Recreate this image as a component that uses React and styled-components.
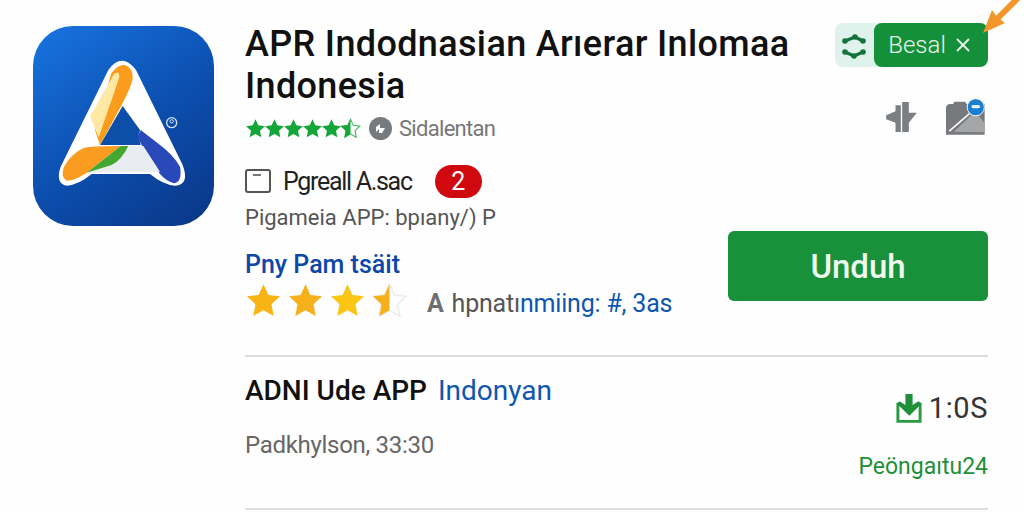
import React from 'react';
import styled, { createGlobalStyle } from 'styled-components';
import { X } from 'lucide-react';

const GlobalStyle = createGlobalStyle`
  html, body {
    margin: 0;
    padding: 0;
    background: #fefefe;
    font-family: Roboto, "Liberation Sans", sans-serif;
    color: #111;
  }
`;

const STAR = 'M12 1.5l3.2 6.9 7.5.9-5.5 5.2 1.4 7.5-6.6-3.7-6.6 3.7 1.4-7.5L1.3 9.3l7.5-.9z';

const AppLogo = () => (
  <LogoSvg viewBox="-51 -72 543 600">
    <defs>
      <linearGradient id="tile" x1="0.15" y1="0" x2="0.8" y2="1">
        <stop offset="0" stopColor="#1770dc" />
        <stop offset="0.55" stopColor="#0c4eae" />
        <stop offset="1" stopColor="#0a3a8c" />
      </linearGradient>
    </defs>
    <rect x="-51" y="-72" width="543" height="600" rx="120" fill="url(#tile)" />
    <path d="M175 60Q215 5 258 60L398 345Q420 405 375 407Q340 405 300 372L125 372Q85 405 50 407Q15 400 32 350Z" fill="#fff" />
    <path d="M218 168L150 285L272 285L265 258L270 240Z" fill="#0d4fa8" />
    <path d="M272 240L262 262L275 285L330 372Q350 395 372 400Q398 395 390 350Q370 315 330 285Z" fill="#2a49b8" />
    <path d="M184 70Q205 42 225 45Q250 55 248 85Q245 108 215 165L150 285L135 240Z" fill="#fb9c1c" />
    <path d="M192 72Q208 60 208 80L198 112L146 262L120 200Z" fill="#fde9a4" />
    <path d="M235 288L280 288L330 365L125 368L110 368L185 345Q215 330 235 288Z" fill="#e9edf2" />
    <path d="M100 295Q110 288 212 288L110 368Q75 392 50 392Q30 380 42 350Q65 310 100 295Z" fill="#f99c1f" />
    <path d="M212 288L235 288Q215 330 185 345L110 368Z" fill="#44a830" />
    <circle cx="365" cy="218" r="15" fill="none" stroke="#d8e6f6" strokeWidth="4" />
    <circle cx="365" cy="214" r="5" fill="none" stroke="#d8e6f6" strokeWidth="3" />
  </LogoSvg>
);

const Star = ({ size, fill, half, edge }) => (
  <svg width={size} height={size} viewBox="0 0 24 24">
    {half ? (
      <>
        <path d={STAR} fill="none" stroke={edge} strokeWidth="1.2" />
        <path d={STAR} fill={fill} style={{ clipPath: 'inset(0 50% 0 0)' }} />
      </>
    ) : (
      <path d={STAR} fill={fill} />
    )}
  </svg>
);

const NodesIcon = () => (
  <svg width="39" height="39" viewBox="0 0 39 39" fill="#14733a">
    <path d="M10 15L20 11L28 15M10 26L19 30L28 26" fill="none" stroke="#14733a" strokeWidth="3.4" />
    <circle cx="10" cy="15" r="2.8" />
    <circle cx="20" cy="11" r="2.8" />
    <circle cx="28" cy="15" r="2.8" />
    <circle cx="10" cy="26" r="2.8" />
    <circle cx="19" cy="30" r="2.8" />
    <circle cx="28" cy="26" r="2.8" />
  </svg>
);

const SplitIcon = () => (
  <svg width="31" height="30" viewBox="200 310 92 90" fill="#7b7f82">
    <path d="M228 320H244V400H228V372L200 362V350L228 338Z" />
    <path d="M248 310H268V342H292L268 372V400H248Z" />
  </svg>
);

const PhotoPinIcon = () => (
  <svg width="39" height="37" viewBox="378 295 118 110">
    <path d="M378 325Q378 312 392 312H400L403 305H436L440 312H495V405H378Z" fill="#77797c" />
    <path d="M402 396L466 335L495 370V398Z" fill="#a4a6a8" />
    <path d="M388 394L462 330" stroke="#fbfbfb" strokeWidth="5" />
    <circle cx="468" cy="322" r="26" fill="#1b7fd0" stroke="#f4f7fa" strokeWidth="3" />
    <rect x="455" y="315" width="26" height="10" rx="5" fill="#e4f1fb" />
  </svg>
);

const DownloadIcon = () => (
  <svg width="26" height="31" viewBox="170 35 78 95">
    <path d="M175 65V122H243V65" fill="none" stroke="#2b9a42" strokeWidth="9" />
    <path d="M198 38H220V72L238 60L247 68L210 105L172 68L180 60L198 72Z" fill="#1f8f38" />
  </svg>
);

const CornerArrow = () => (
  <ArrowSvg viewBox="0 0 52 50">
    <path d="M46 -2L24 20" stroke="#f3962a" strokeWidth="6" />
    <path d="M11 33L20 10L25 17L33 23Z" fill="#f3962a" />
  </ArrowSvg>
);

const App = () => (
  <>
    <GlobalStyle />
    <Page>
      <CornerArrow />
      <LogoCell>
        <AppLogo />
      </LogoCell>
      <Content>
        <HeadRow>
          <HeadMain>
            <Title>
              APR Indodnasian Arıerar Inlomaa
              <br />
              Indonesia
            </Title>
            <RatingRow>
              <Stars $gap={-2} $after={8}>
                {[0, 1, 2, 3, 4].map((i) => (
                  <Star key={i} size={21} fill="#13a538" />
                ))}
                <Star size={21} fill="#13a538" half edge="#3eb45f" />
              </Stars>
              <GreyBadge>
                <svg width="17" height="17" viewBox="0 0 17 17" fill="#fff">
                  <path d="M4 7L8 4V8H13L10 13H7V9L4 12Z" />
                </svg>
              </GreyBadge>
              <Muted>Sidalentan</Muted>
            </RatingRow>
          </HeadMain>
          <HeadSide>
            <ChipGroup>
              <ChipIcon>
                <NodesIcon />
              </ChipIcon>
              <ChipButton>
                Besal <X size={22} strokeWidth={2} />
              </ChipButton>
            </ChipGroup>
            <ToolIcons>
              <SplitIcon />
              <PhotoPinIcon />
            </ToolIcons>
          </HeadSide>
        </HeadRow>

        <InfoRow>
          <InfoMain>
            <PackageRow>
              <CheckBox />
              <PackageLabel>Pgreall A.sac</PackageLabel>
              <CountBadge>2</CountBadge>
            </PackageRow>
            <SubLine>Pigameia APP: bpıany/) P</SubLine>
            <LinkLine>Pny Pam tsäit</LinkLine>
            <ScoreRow>
              <Stars $gap={5} $after={0}>
                <Star size={37} fill="#f8b415" />
                <Star size={37} fill="#f6b01a" />
                <Star size={37} fill="#fbc515" />
                <Star size={37} fill="#f6b01a" half edge="#eeeeee" />
              </Stars>
              <ScoreText>
                <ScoreMark>A</ScoreMark> hpnatı<Blue>nmiing: #, 3as</Blue>
              </ScoreText>
            </ScoreRow>
          </InfoMain>
          <DownloadButton>Unduh</DownloadButton>
        </InfoRow>

        <ListRow>
          <ListMain>
            <ListTitle>
              ADNI Ude APP <ListAccent>Indonyan</ListAccent>
            </ListTitle>
            <ListDate>Padkhylson, 33:30</ListDate>
          </ListMain>
          <ListSide>
            <TimeRow>
              <DownloadIcon />
              <span>1:0S</span>
            </TimeRow>
            <GreenNote>Peöngaıtu24</GreenNote>
          </ListSide>
        </ListRow>
      </Content>
    </Page>
  </>
);

const Page = styled.div`
  position: relative;
  width: 1024px;
  height: 512px;
  overflow: hidden;
  display: flex;
  box-sizing: border-box;
  padding: 26px 36px 0 33px;
`;

const ArrowSvg = styled.svg`
  position: absolute;
  top: 0;
  left: 972px;
  width: 52px;
  height: 50px;
`;

const LogoCell = styled.div`
  width: 212px;
  flex-shrink: 0;
`;

const LogoSvg = styled.svg`
  display: block;
  width: 181px;
  height: 200px;
`;

const Content = styled.div`
  flex: 1;
  display: flex;
  flex-direction: column;
`;

const HeadRow = styled.div`
  display: flex;
  justify-content: space-between;
  height: 127px;
`;

const HeadMain = styled.div`
  display: flex;
  flex-direction: column;
`;

const Title = styled.h1`
  margin: -3px 0 0;
  font-size: 36px;
  font-weight: 500;
  line-height: 42px;
  letter-spacing: 0.35px;
  color: #111;
  white-space: nowrap;
`;

const RatingRow = styled.div`
  display: flex;
  align-items: center;
  height: 30px;
  margin-top: 6px;
`;

const Stars = styled.div`
  display: flex;
  align-items: center;
  margin-right: ${(p) => p.$after}px;

  & > svg + svg {
    margin-left: ${(p) => p.$gap}px;
  }
`;

const GreyBadge = styled.div`
  width: 23px;
  height: 23px;
  border-radius: 50%;
  background: #777b7e;
  display: flex;
  align-items: center;
  justify-content: center;
  margin-right: 7px;
`;

const Muted = styled.span`
  font-size: 22px;
  color: #777;
  letter-spacing: -0.7px;
`;

const HeadSide = styled.div`
  width: 153px;
  display: flex;
  flex-direction: column;
  align-items: flex-end;
`;

const ChipGroup = styled.div`
  display: flex;
  width: 153px;
  height: 44px;
  margin-top: -3px;
  background: #dff2ec;
  border-radius: 8px;
`;

const ChipIcon = styled.div`
  width: 39px;
  display: flex;
  align-items: center;
  justify-content: center;
`;

const ChipButton = styled.div`
  flex: 1;
  display: flex;
  align-items: center;
  justify-content: center;
  gap: 6px;
  background: #15903a;
  border-radius: 8px;
  color: #e8f6ea;
  font-size: 24px;
  font-weight: 300;
  white-space: nowrap;
`;

const ToolIcons = styled.div`
  display: flex;
  align-items: center;
  gap: 29px;
  margin: 31px 3px 0 0;
`;

const InfoRow = styled.div`
  display: flex;
  justify-content: space-between;
  height: 202px;
  border-bottom: 2px solid #dedede;
`;

const InfoMain = styled.div`
  display: flex;
  flex-direction: column;
`;

const PackageRow = styled.div`
  display: flex;
  align-items: center;
  height: 34px;
  margin-top: 11px;
`;

const CheckBox = styled.div`
  position: relative;
  width: 26px;
  height: 24px;
  border: 2px solid #555;
  border-radius: 3px;
  box-sizing: border-box;
  margin-right: 12px;

  &::before {
    content: '';
    position: absolute;
    top: 3px;
    left: 6px;
    width: 8px;
    height: 2px;
    background: #777;
  }
`;

const PackageLabel = styled.span`
  font-size: 25px;
  color: #222;
  letter-spacing: -1.3px;
  margin-right: 23px;
`;

const CountBadge = styled.span`
  width: 47px;
  height: 33px;
  border-radius: 17px;
  background: #d0090e;
  color: #fff;
  font-size: 25px;
  line-height: 33px;
  text-align: center;
`;

const SubLine = styled.div`
  font-size: 22px;
  line-height: 30px;
  color: #555;
  margin-top: 5px;
  white-space: nowrap;
`;

const LinkLine = styled.div`
  font-size: 25px;
  font-weight: 500;
  line-height: 30px;
  color: #0d47a8;
  margin-top: 17px;
`;

const ScoreRow = styled.div`
  display: flex;
  align-items: center;
  margin-top: 2px;
`;

const ScoreText = styled.div`
  font-size: 25px;
  color: #555;
  margin: 6px 0 0 19px;
  white-space: nowrap;
  letter-spacing: -0.2px;
`;

const ScoreMark = styled.span`
  font-weight: 700;
  color: #6f6f6f;
  margin-right: 2px;
`;

const Blue = styled.span`
  color: #0e56ae;
`;

const DownloadButton = styled.button`
  width: 260px;
  height: 70px;
  margin-top: 78px;
  border: none;
  border-radius: 6px;
  background: #18913a;
  color: #eef8ef;
  font-family: inherit;
  font-size: 33px;
  font-weight: 500;
  cursor: pointer;
`;

const ListRow = styled.div`
  display: flex;
  justify-content: space-between;
  height: 151px;
  border-bottom: 2px solid #dedede;
`;

const ListMain = styled.div`
  display: flex;
  flex-direction: column;
`;

const ListTitle = styled.div`
  font-size: 28px;
  font-weight: 500;
  line-height: 32px;
  margin-top: 18px;
  white-space: nowrap;
`;

const ListAccent = styled.span`
  color: #0e56ae;
  font-weight: 400;
  margin-left: 4px;
`;

const ListDate = styled.div`
  font-size: 24px;
  line-height: 28px;
  color: #666;
  margin-top: 24px;
  letter-spacing: -0.3px;
`;

const ListSide = styled.div`
  display: flex;
  flex-direction: column;
  align-items: flex-end;
`;

const TimeRow = styled.div`
  display: flex;
  align-items: center;
  gap: 7px;
  font-size: 29px;
  letter-spacing: 0.6px;
  color: #333;
  margin-top: 34px;
`;

const GreenNote = styled.div`
  font-size: 23px;
  color: #1f8f38;
  margin-top: 28px;
`;

export default App;
